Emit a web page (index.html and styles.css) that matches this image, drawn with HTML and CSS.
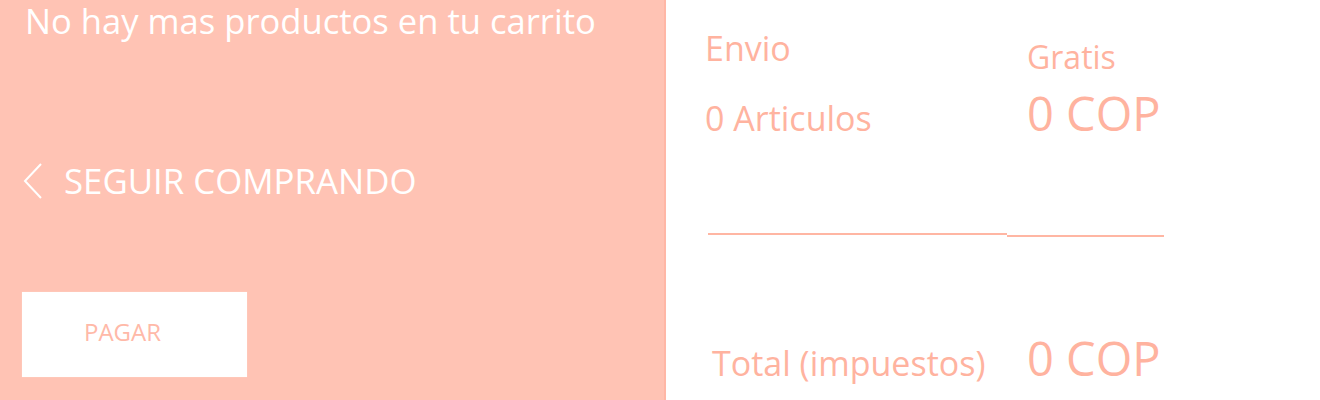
FILE: index.html
```html
<!DOCTYPE html>
<html lang="es">
<head>
<meta charset="utf-8">
<title>Carrito</title>
<link rel="stylesheet" href="styles.css">
</head>
<body>
<div class="cart">
  <section class="cart-main">
    <h1 class="empty-msg">No hay mas productos en tu carrito</h1>
    <a class="continue" href="#">
      <svg class="chev" width="20" height="36" viewBox="0 0 20 36" aria-hidden="true">
        <polyline points="18,1 2,18 18,35" fill="none" stroke="#fff" stroke-width="2"/>
      </svg>
      <span>SEGUIR COMPRANDO</span>
    </a>
    <button class="pay">PAGAR</button>
  </section>
  <aside class="summary">
    <div class="row row-top">
      <span class="label">Envio</span>
      <span class="ship">Gratis</span>
    </div>
    <div class="row row-base">
      <span class="label">0 Articulos</span>
      <span class="amount">0 COP</span>
    </div>
    <div class="rule"><span class="seg seg-a"></span><span class="seg seg-b"></span></div>
    <div class="row row-base row-total">
      <span class="label label-total">Total (impuestos)</span>
      <span class="amount">0 COP</span>
    </div>
  </aside>
</div>
</body>
</html>
```

FILE: styles.css
```css
html, body {
  margin: 0;
  padding: 0;
  background: #ffffff;
}
body {
  font-family: "Open Sans", "Noto Sans", sans-serif;
  width: 1320px;
  height: 400px;
  overflow: hidden;
}
.cart {
  display: flex;
  height: 400px;
}
.cart-main {
  width: 666px;
  height: 400px;
  box-sizing: border-box;
  background: #ffc3b4;
  border-right: 2px solid #ffb7a6;
  padding-left: 22px;
  display: flex;
  flex-direction: column;
  align-items: flex-start;
}
.empty-msg {
  margin: 1px 0 0 3px;
  font-weight: 400;
  font-size: 34.6px;
  line-height: 40px;
  color: #ffffff;
  white-space: nowrap;
}
.continue {
  margin-top: 120px;
  display: flex;
  align-items: center;
  gap: 21px;
  color: #ffffff;
  text-decoration: none;
  font-size: 34.8px;
  line-height: 40px;
  white-space: nowrap;
}
.chev {
  display: block;
  margin-left: 1px;
}
.pay {
  margin-top: 91px;
  width: 225px;
  height: 85px;
  background: #ffffff;
  border: 0;
  padding: 0 0 6px 62px;
  text-align: left;
  font-family: inherit;
  font-size: 24px;
  line-height: 30px;
  color: #ffb9a8;
  box-shadow: 0 0 1px #ffd9cf;
}
.summary {
  flex: 1;
  padding: 28px 0 0 39px;
  color: #ffb39f;
  display: flex;
  flex-direction: column;
}
.row {
  display: flex;
  white-space: nowrap;
}
.row-top {
  align-items: flex-start;
}
.row-base {
  align-items: baseline;
  margin-top: 8px;
}
.label {
  width: 322px;
  flex: none;
  font-size: 34px;
  line-height: 40px;
}
.ship {
  margin-top: 9px;
  font-size: 32px;
  line-height: 40px;
}
.amount {
  font-size: 47px;
  line-height: 56px;
}
.rule {
  display: flex;
  align-items: flex-start;
  margin: 92px 0 0 3px;
}
.seg {
  display: block;
  height: 2px;
  background: #ffb6a3;
}
.seg-a {
  width: 299px;
}
.seg-b {
  width: 157px;
  margin-top: 2px;
}
.row-total {
  margin-top: 93px;
}
.label-total {
  padding-left: 7px;
  width: 315px;
}
```
